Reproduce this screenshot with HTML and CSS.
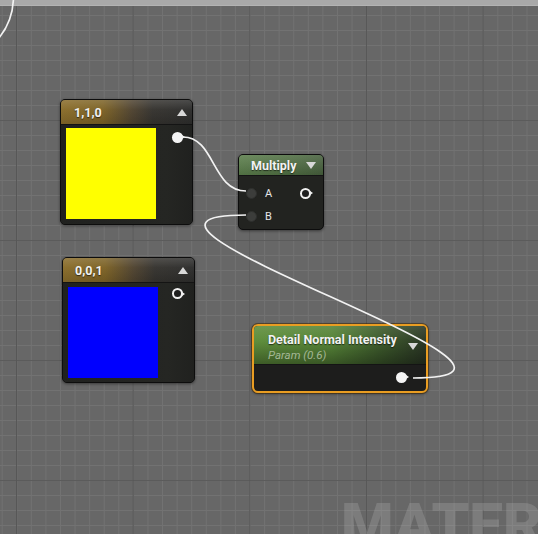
FILE: index.html
```html
<!DOCTYPE html>
<html>
<head>
<meta charset="utf-8">
<link rel="stylesheet" href="styles.css">
</head>
<body>
<div class="canvas">
  <div class="topbar"></div>
  <div class="watermark">MATERIAL</div>

  <div class="node n-yellow">
    <div class="hdr hdr-gold"><span class="title">1,1,0</span><span class="tri-up"></span></div>
    <div class="cbody">
      <div class="swatch sw-yellow"></div>
      <span class="pin filled p-yellow"></span>
    </div>
  </div>

  <div class="node n-blue">
    <div class="hdr hdr-gold"><span class="title">0,0,1</span><span class="tri-up"></span></div>
    <div class="cbody">
      <div class="swatch sw-blue"></div>
      <span class="pin ring p-blue"></span>
    </div>
  </div>

  <div class="node n-mult">
    <div class="hdr hdr-green"><span class="title">Multiply</span><span class="tri-down"></span></div>
    <div class="mbody">
      <div class="row"><span class="inpin"></span><span class="plabel">A</span><span class="pin ring p-mult"></span></div>
      <div class="row"><span class="inpin"></span><span class="plabel">B</span></div>
    </div>
  </div>

  <div class="node n-param">
    <div class="hdr hdr-param">
      <div class="titles"><span class="title">Detail Normal Intensity</span><span class="sub">Param (0.6)</span></div>
      <span class="tri-down"></span>
    </div>
    <div class="pbody"><span class="pin filled"></span></div>
  </div>

  <svg class="wires" width="538" height="534" viewBox="0 0 538 534">
    <path d="M13.5,-2 C13,14 8,27 -1,38"/>
    <path d="M183,137 C215,137 212,191 246,191"/>
    <path d="M413,378 C605,378 55,215 246,215"/>
  </svg>
</div>
</body>
</html>
```

FILE: styles.css
```css
* { box-sizing: border-box; }
html, body { margin: 0; padding: 0; }
body {
  font-family: Roboto, "Noto Sans", sans-serif;
  background: #676767;
}
.canvas {
  position: relative;
  width: 538px;
  height: 534px;
  overflow: hidden;
  background-color: #676767;
  background-image:
    linear-gradient(to right, #575757 1px, transparent 1px),
    linear-gradient(to bottom, #5b5b5b 1px, transparent 1px),
    linear-gradient(to right, #727272 1px, transparent 1px),
    linear-gradient(to bottom, #727272 1px, transparent 1px);
  background-size: 116.67px 534px, 538px 120px, 14.583px 534px, 538px 15px;
  background-position: 16px 0, 0 0, 1.7px 0, 0 0;
}
.topbar {
  height: 6px;
  background: #a9a9a9;
  border-bottom: 1px solid #b3b3b3;
}
.watermark {
  position: absolute;
  left: 341px;
  top: 495px;
  font-family: Roboto, sans-serif;
  font-weight: 900;
  font-size: 60px;
  line-height: 1;
  color: rgba(200, 200, 200, 0.22);
  white-space: nowrap;
}
.wires {
  position: absolute;
  left: 0;
  top: 0;
  z-index: 5;
  pointer-events: none;
}
.wires path {
  fill: none;
  stroke: #f2f2f2;
  stroke-width: 1.7;
}

/* nodes */
.node {
  position: absolute;
  background: #222320;
  border: 1px solid #0d0d0d;
  border-radius: 5px;
  box-shadow: 0 1px 3px rgba(0, 0, 0, 0.45);
  overflow: hidden;
}
.n-yellow { left: 60px; top: 99px; width: 133px; height: 126px; }
.n-blue { left: 62px; top: 257px; width: 133px; height: 126px; }
.n-mult { left: 238px; top: 154px; width: 86px; height: 76px; }
.n-param {
  left: 252px; top: 324px; width: 176px; height: 69px;
  border: 2px solid #e99d22;
  border-radius: 6px;
  background: #1d1d1c;
  overflow: visible;
  box-shadow: 0 0 0 1px rgba(60, 35, 0, 0.5), 0 1px 3px rgba(0, 0, 0, 0.45);
}

.hdr {
  display: flex;
  align-items: center;
  justify-content: space-between;
  border-bottom: 1px solid #141414;
}
.title {
  font-weight: 700;
  font-size: 12.5px;
  color: #f2f2f2;
  text-shadow: 0 1px 1px rgba(0, 0, 0, 0.6);
  white-space: nowrap;
}
.hdr-gold {
  height: 25px;
  padding: 0 5px 0 13px;
  background:
    linear-gradient(to bottom, rgba(255, 255, 255, 0.14), rgba(255, 255, 255, 0.02) 40%, rgba(0, 0, 0, 0.12)),
    linear-gradient(to right, #8a6d2b 0%, #7d6327 32%, #504431 54%, #363430 70%, #2e2e2d 100%);
}
.n-blue .hdr-gold { padding: 0 6px 0 12px; }
.hdr-green {
  height: 21px;
  padding: 0 7px 0 12px;
  background:
    linear-gradient(to bottom, rgba(255, 255, 255, 0.12), rgba(0, 0, 0, 0.1)),
    linear-gradient(to right, #5a7d4a, #4f6e42 60%, #465f3c);
}
.hdr-param {
  height: 39px;
  padding: 0 8px 0 14px;
  border-radius: 4px 4px 0 0;
  align-items: flex-start;
  background:
    linear-gradient(to bottom, rgba(255, 255, 255, 0.10), rgba(0, 0, 0, 0) 40%, rgba(0, 0, 0, 0.35)),
    linear-gradient(to right, #5f8e3c 0%, #568438 45%, #3d5a2c 75%, #2c3826 100%);
}
.titles {
  display: flex;
  flex-direction: column;
  padding-top: 6px;
}
.sub {
  font-style: italic;
  font-size: 11.5px;
  color: #a3b795;
  line-height: 14px;
  margin-top: 1px;
}
.hdr-param .tri-down { margin-top: 17px; }

.tri-up {
  width: 0; height: 0;
  border-left: 5px solid transparent;
  border-right: 5px solid transparent;
  border-bottom: 7px solid #d8d8d8;
}
.tri-down {
  width: 0; height: 0;
  border-left: 5px solid transparent;
  border-right: 5px solid transparent;
  border-top: 7px solid #d8d8d8;
}

.cbody {
  display: flex;
  align-items: flex-start;
  padding: 3px 5px 0 5px;
  background: linear-gradient(to right, #20211f, #252623 80%, #20211f);
  height: 100%;
}
.n-blue .cbody { padding-top: 4px; }
.swatch { width: 90px; height: 91px; flex: none; }
.sw-yellow { background: #ffff00; }
.sw-blue { background: #0000ff; }

.pin {
  position: relative;
  width: 11px;
  height: 11px;
  border-radius: 50%;
  flex: none;
}
.pin::after {
  content: "";
  position: absolute;
  left: 10px;
  top: 3px;
  border-top: 2.5px solid transparent;
  border-bottom: 2.5px solid transparent;
  border-left: 3px solid #f2f2f2;
}
.filled { background: #f4f4f4; }
.ring { border: 2px solid #f0f0f0; background: #1e1e1e; }
.ring::after { left: 8px; top: 1.5px; }
.p-yellow { margin: 4px 0 0 16px; }
.p-blue { margin: 1px 0 0 14px; }

.mbody {
  display: flex;
  flex-direction: column;
  gap: 3px;
  padding: 7px 0 0 7px;
}
.row {
  display: flex;
  align-items: center;
  height: 20px;
}
.inpin {
  width: 11px;
  height: 11px;
  border-radius: 50%;
  background: #3c3d3b;
  border: 1px solid #2f302e;
  flex: none;
}
.plabel {
  font-size: 11px;
  color: #e6e6e6;
  margin-left: 8px;
  width: 35px;
}
.p-mult { margin-left: 0; }

.pbody {
  display: flex;
  justify-content: flex-end;
  padding: 7px 19px 0 0;
}
```
